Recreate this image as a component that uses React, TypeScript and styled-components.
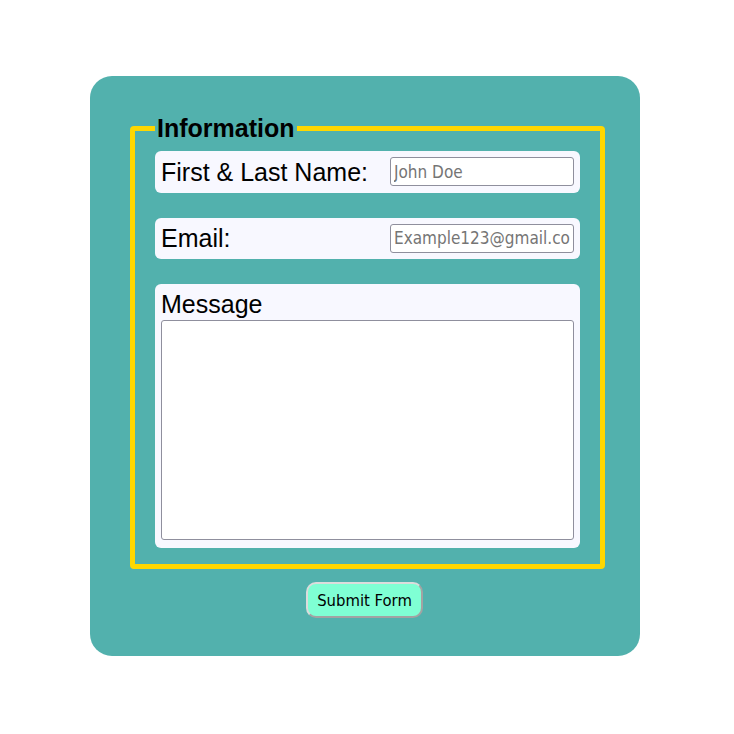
import React from 'react';
import styled, { createGlobalStyle } from 'styled-components';

const GlobalStyle = createGlobalStyle`
  body {
    margin: 0;
    background: #ffffff;
    font-family: 'Liberation Sans', Arial, sans-serif;
  }
`;

const Page = styled.main`
  padding: 76px 0 0 90px;
`;

const Card = styled.form`
  width: 550px;
  box-sizing: border-box;
  background-color: #52b1ad;
  border-radius: 22px;
  padding: 38px 35px 38px 40px;
  display: flex;
  flex-direction: column;
  align-items: flex-start;
`;

const Fieldset = styled.fieldset`
  width: 475px;
  box-sizing: border-box;
  margin: 0;
  border: 5px solid #ffd700;
  border-radius: 4px;
  padding: 9px 20px 16px;
  display: flex;
  flex-direction: column;
  gap: 25px;
`;

const Legend = styled.legend`
  font-size: 25px;
  line-height: 28px;
  font-weight: bold;
  padding: 0 2px;
  color: #000;
`;

const Row = styled.div<{ $stacked?: boolean }>`
  background-color: #f8f8ff;
  border-radius: 6px;
  padding: ${(p) => (p.$stacked ? '6px 6px 8px' : '0 6px')};
  height: ${(p) => (p.$stacked ? 'auto' : '41.5px')};
  box-sizing: border-box;
  display: flex;
  flex-direction: ${(p) => (p.$stacked ? 'column' : 'row')};
  align-items: ${(p) => (p.$stacked ? 'stretch' : 'center')};
  justify-content: space-between;
  gap: 2px;
`;

const Label = styled.label`
  font-size: 25px;
  line-height: 28px;
  color: #000;
`;

const Input = styled.input`
  width: 184px;
  height: 29px;
  box-sizing: border-box;
  border: 1px solid #8f8f9d;
  border-radius: 3px;
  padding: 1px 3px;
  font-family: 'DejaVu Sans Condensed', 'DejaVu Sans', Tahoma, sans-serif;
  font-size: 17px;
  background: #fff;
  &::placeholder {
    color: #757575;
  }
`;

const TextArea = styled.textarea`
  width: 413px;
  height: 220px;
  box-sizing: border-box;
  border: 1px solid #8f8f9d;
  border-radius: 3px;
  resize: none;
  background: #fff;
`;

const Submit = styled.button`
  align-self: center;
  margin: 13px 6px 0 0;
  width: 117px;
  height: 36px;
  box-sizing: border-box;
  background-color: #7fffd4;
  border: 2px solid;
  border-color: #dcdcdc #a3a3a3 #a3a3a3 #dcdcdc;
  border-radius: 10px;
  font-family: 'DejaVu Sans Condensed', 'DejaVu Sans', Tahoma, sans-serif;
  font-size: 16.5px;
  color: #000;
`;

const App = () => {
  return (
    <Page>
      <GlobalStyle />
      <Card>
        <Fieldset>
          <Legend>Information</Legend>
          <Row>
            <Label htmlFor="name">First &amp; Last Name:</Label>
            <Input id="name" type="text" placeholder="John Doe" />
          </Row>
          <Row>
            <Label htmlFor="email">Email:</Label>
            <Input id="email" type="email" placeholder="Example123@gmail.com" />
          </Row>
          <Row $stacked>
            <Label htmlFor="message">Message</Label>
            <TextArea id="message" />
          </Row>
        </Fieldset>
        <Submit type="submit">Submit Form</Submit>
      </Card>
    </Page>
  );
};

export default App;
